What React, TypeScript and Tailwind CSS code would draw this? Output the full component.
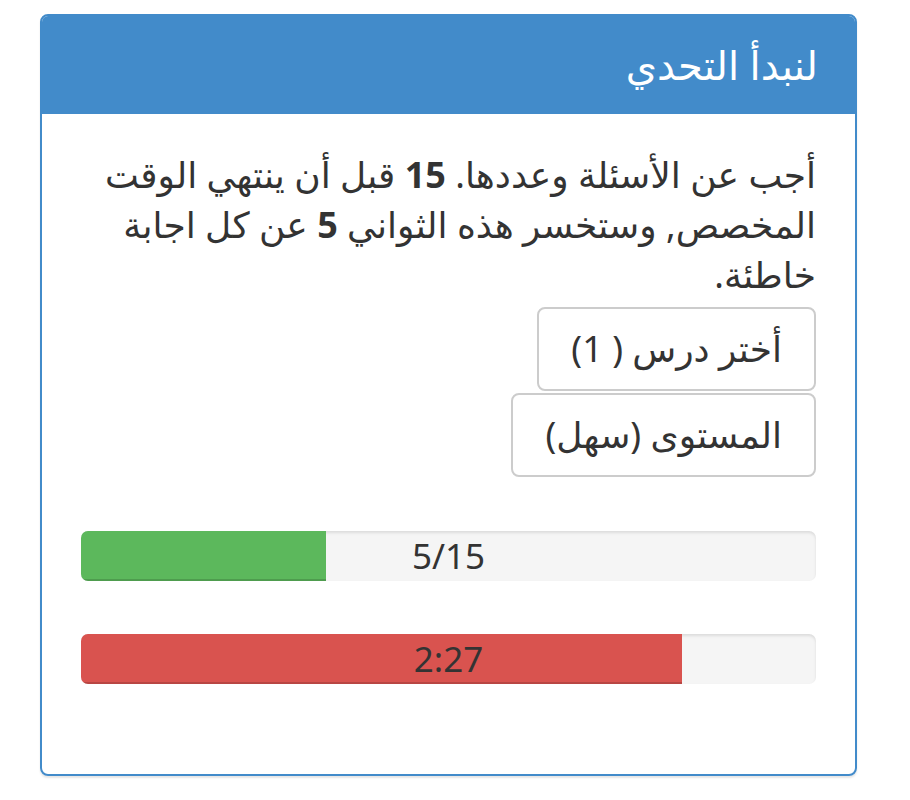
const Bar = ({ pct, color, label }: { pct: number; color: string; label: string }) => (
  <div dir="ltr" className="relative h-[50px] w-full overflow-hidden rounded-[7px] bg-[#f5f5f5] shadow-[inset_0_2px_3px_rgba(0,0,0,0.1)]">
    <div className={`h-full ${color} shadow-[inset_0_-2px_0_rgba(0,0,0,0.15)]`} style={{ width: `${pct}%` }} />
    <span className="absolute inset-0 flex items-center justify-center text-[35px] text-[#333]">{label}</span>
  </div>
);

const App = () => {
  return (
    <div dir="rtl" className="min-h-[800px] bg-white pt-[14px] pl-[40px] pr-[53px] font-['Noto_Sans','DejaVu_Sans',sans-serif] text-[#333]">
      <div className="w-full rounded-[8px] border-2 border-[#428bca] shadow-[0_2px_2px_rgba(0,0,0,0.1)] overflow-hidden">
        <div className="h-[98px] bg-[#428bca] px-[37px] flex items-center">
          <h3 className="text-[40px] text-white leading-none">لنبدأ التحدي</h3>
        </div>

        <div className="px-[39px] pt-[36px] pb-[90px]">
          <p className="text-[36px] leading-[50px]">
            أجب عن الأسئلة وعددها. <b>15</b> قبل أن ينتهي الوقت المخصص, وستخسر هذه الثواني <b>5</b> عن كل اجابة خاطئة.
          </p>

          <div className="flex flex-col items-start">
            <button className="mt-[7px] h-[84px] rounded-[8px] border-2 border-[#ccc] bg-white px-[32px] text-[36px] text-[#333]">
              أختر درس ( 1)
            </button>
            <button className="mt-[2px] h-[84px] rounded-[8px] border-2 border-[#ccc] bg-white px-[32px] text-[36px] text-[#333]">
              المستوى (سهل)
            </button>
          </div>

          <div className="mt-[54px]">
            <Bar pct={33.3} color="bg-[#5cb85c]" label="5/15" />
          </div>
          <div className="mt-[53px]">
            <Bar pct={81.8} color="bg-[#d9534f]" label="2:27" />
          </div>
        </div>
      </div>
    </div>
  );
};

export default App;
